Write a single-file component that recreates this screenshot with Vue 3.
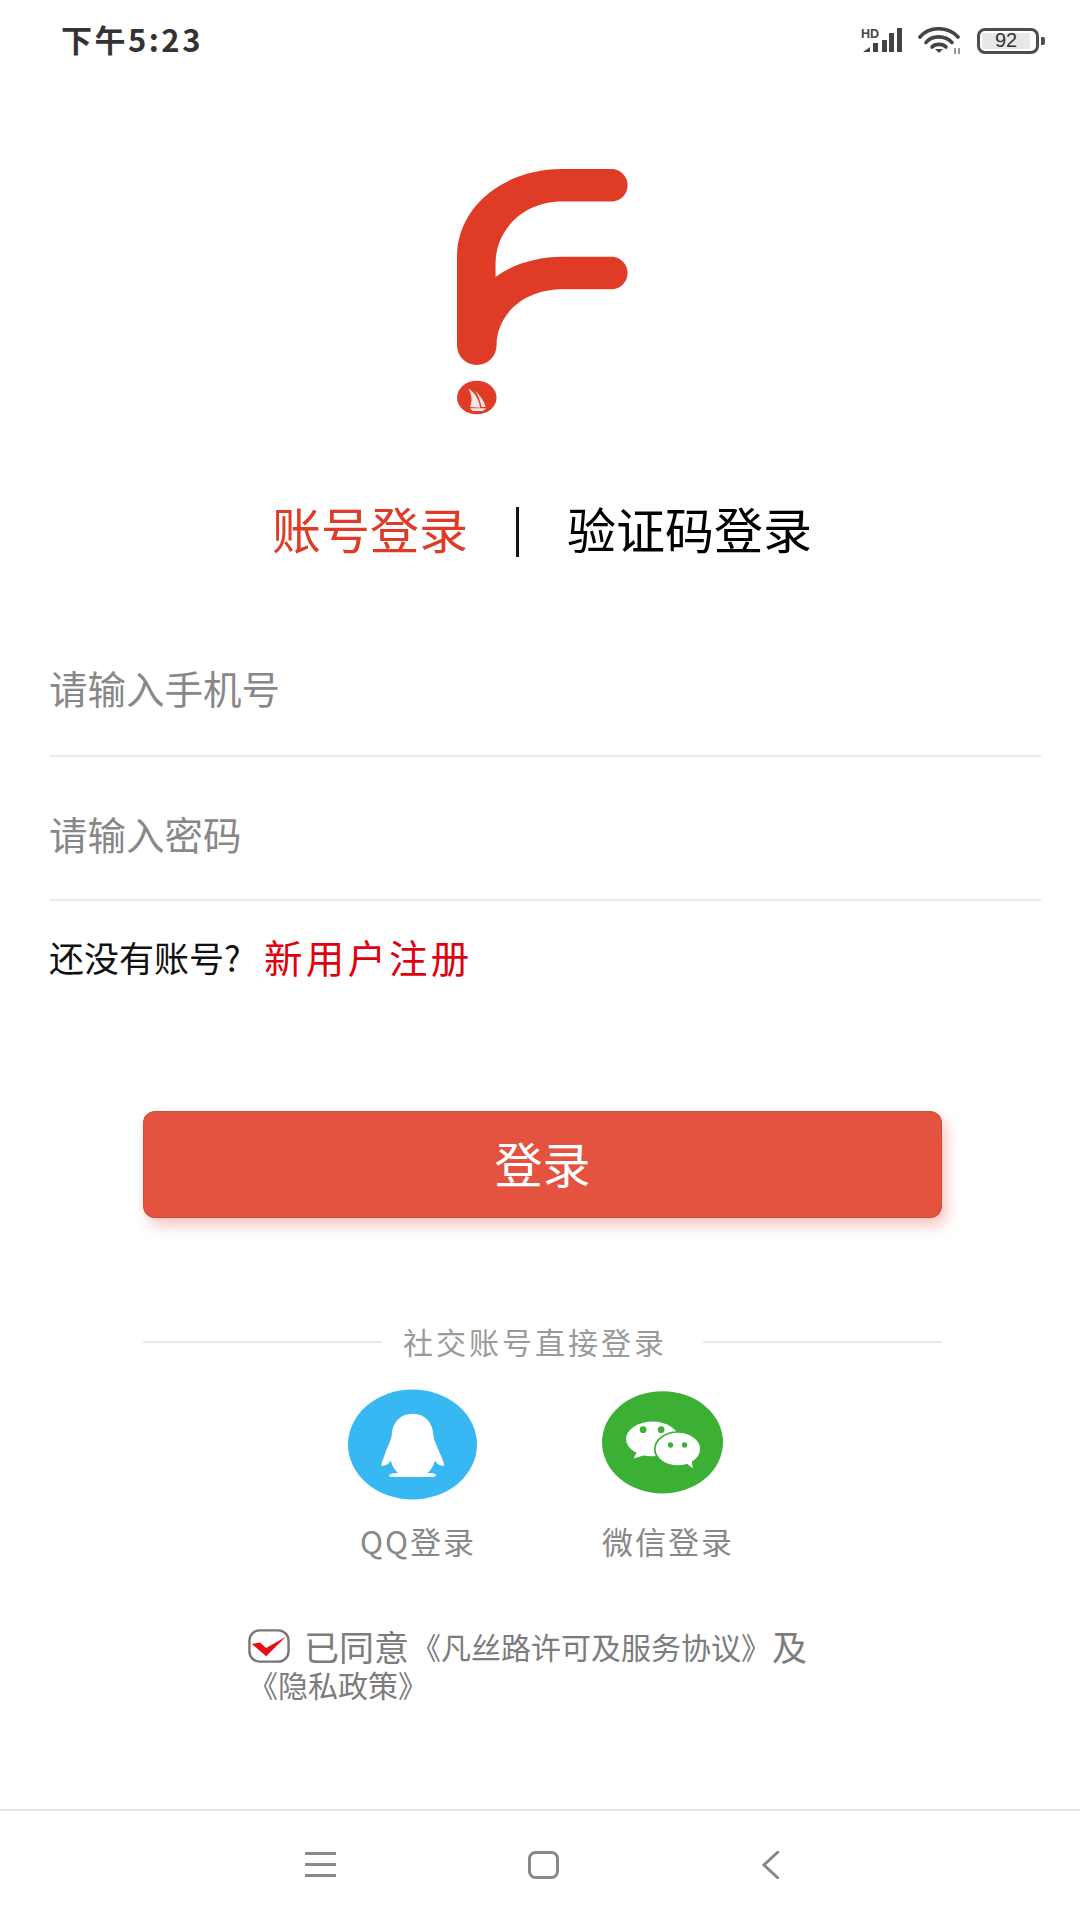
<script setup>
import { ref } from "vue";

const mode = ref("account");
const agreed = ref(true);
</script>

<template>
  <div class="page">
    <!-- статус бар -->
    <div class="status-bar">
      <span class="time">下午5:23</span>
      <div class="status-icons">
        <svg class="signal" width="43" height="28" viewBox="0 0 43 28">
          <text x="0" y="10.500" class="hd">HD</text>
          <path d="M2 25l7-5v5zM12 25v-9h5v9zM21 25V13h5v12zM28 25V6h5v19zM36 25V1h5v24z" fill="#444" />
        </svg>
        <svg class="wifi" width="43" height="28" viewBox="0 0 43 28">
          <g fill="none" stroke="#444" stroke-width="3.6" stroke-linecap="round">
            <path d="M2 10C11 -1 30 -1 40 10" />
            <path d="M8 15.500C14 8 27 8 34 15.500" />
            <path d="M14 20C17 16.500 25 16.500 28 20" />
          </g>
          <path d="M17 22h8l-4 4z" fill="#444" />
          <path d="M37 21v6M41 21v6" stroke="#777" stroke-width="1.500" />
        </svg>
        <div class="battery">
          <div class="battery-body"><span class="battery-level">92</span></div>
          <div class="battery-nub"></div>
        </div>
      </div>
    </div>

    <!-- логотип -->
    <div class="logo">
      <svg width="174" height="246" viewBox="112 58 510 734" preserveAspectRatio="none">
        <path
          d="M570 58A49 49 0 0 1 570 155L420 155C310 155 226 235 225 340L225 380C280 340 350 320 420 320L570 320A49 49 0 0 1 570 417L420 417C310 417 228 490 228 585A58 58 0 0 1 112 585L112 320C112 170 250 58 420 58Z"
          fill="#e03b27"
        />
        <ellipse cx="170" cy="740" rx="58" ry="50" fill="#e03b27" />
        <path d="M145 713C165 725 176 745 180 770L150 768C158 750 155 730 145 713ZM165 720C182 735 192 752 196 768L184 768C180 750 175 735 165 720ZM150 772L198 772L188 780L158 780Z" fill="#f7e6e4" />
      </svg>
    </div>

    <!-- вкладки -->
    <div class="tabs">
      <span class="tab" :class="{ active: mode === 'account' }">账号登录</span>
      <span class="tab-sep"></span>
      <span class="tab" :class="{ active: mode === 'code' }">验证码登录</span>
    </div>

    <div class="form">
      <div class="field">请输入手机号</div>
      <div class="field">请输入密码</div>
      <div class="hint">
        <span class="hint-text">还没有账号?</span>
        <span class="hint-link">新用户注册</span>
      </div>
    </div>

    <button class="login-btn">登录</button>

    <div class="divider">
      <span class="divider-line"></span>
      <span class="divider-text">社交账号直接登录</span>
      <span class="divider-line"></span>
    </div>

    <!-- соцсети -->
    <div class="social">
      <div class="social-item qq">
        <svg class="social-icon" width="129" height="111" viewBox="83 60 389 332">
          <ellipse cx="277.500" cy="226" rx="194.500" ry="166" fill="#37b8f3" />
          <path
            d="M278 133C240 133 217 160 215 195C215 210 205 225 196 250C190 268 184 280 183 290C195 292 205 285 212 275C218 295 226 305 234 312C222 312 207 314 207 320C207 324 215 324 225 324L330 324C342 324 349 323 348 318C347 313 335 312 322 312C332 305 340 292 345 275C352 286 362 292 373 290C372 275 362 258 355 240C348 225 341 210 340 195C338 160 316 133 278 133Z"
            fill="#fff"
          />
        </svg>
        <span class="social-label">QQ登录</span>
      </div>
      <div class="social-item wechat">
        <svg class="social-icon" width="121" height="103" viewBox="845 65 362 307">
          <ellipse cx="1026" cy="218" rx="181" ry="153" fill="#3cb034" />
          <ellipse cx="996" cy="208" rx="79" ry="52" fill="#fff" />
          <path d="M952 240L940 266L985 252Z" fill="#fff" />
          <ellipse cx="1072" cy="238" rx="69" ry="51" fill="#fff" stroke="#3cb034" stroke-width="5" />
          <path d="M1095 278L1117 296L1112 268Z" fill="#fff" />
          <circle cx="968" cy="180" r="10" fill="#3cb034" />
          <circle cx="1022" cy="180" r="10" fill="#3cb034" />
          <circle cx="1050" cy="226" r="8" fill="#3cb034" />
          <circle cx="1092" cy="226" r="8" fill="#3cb034" />
        </svg>
        <span class="social-label">微信登录</span>
      </div>
    </div>

    <!-- соглашение -->
    <div class="agree">
      <svg class="check" width="42" height="34" viewBox="55 62 123 100">
        <rect x="59" y="66" width="115" height="92" rx="30" fill="#fff" stroke="#777" stroke-width="7" />
        <path v-if="agreed" d="M66 106L90 102L108 118L166 85L108 142Z" fill="#e60f17" />
      </svg>
      <span class="agree-big">已同意</span>
      <span class="agree-small">《凡丝路许可及服务协议》</span>
      <span class="agree-big tail">及</span>
    </div>
    <div class="agree-second">《隐私政策》</div>

    <!-- навигация -->
    <div class="nav-bar">
      <svg width="31" height="28" viewBox="0 0 31 28">
        <path d="M1 2.500H30M1 13.500H30M1 24.500H30" stroke="#888" stroke-width="3" stroke-linecap="round" />
      </svg>
      <svg width="31" height="28" viewBox="0 0 31 28">
        <rect x="1.500" y="1.500" width="28" height="25" rx="6" fill="none" stroke="#888" stroke-width="3" />
      </svg>
      <svg width="17" height="28" viewBox="0 0 17 28">
        <path d="M16 1L2 14L16 27" fill="none" stroke="#888" stroke-width="3" stroke-linecap="round" />
      </svg>
    </div>
  </div>
</template>

<style scoped>
.page {
  width: 1080px;
  height: 1920px;
  display: flex;
  flex-direction: column;
  background: #fff;
  font-family: "Noto Sans CJK SC", "Liberation Sans", sans-serif;
  overflow: hidden;
}

.status-bar {
  height: 82px;
  display: flex;
  align-items: center;
  justify-content: space-between;
  padding: 0 35px 0 61px;
  box-sizing: border-box;
}

.time {
  font-size: 31px;
  line-height: 40px;
  padding-bottom: 4px;
  font-weight: 700;
  letter-spacing: 2.5px;
  color: #333;
}

.status-icons {
  display: flex;
  align-items: center;
}

.signal,
.wifi {
  display: block;
}

.signal {
  margin-right: 14px;
}

.wifi {
  margin-right: 16px;
}

.hd {
  font-family: "Liberation Sans", sans-serif;
  font-size: 12.5px;
  font-weight: 700;
  fill: #444;
}

.battery {
  display: flex;
  align-items: center;
}

.battery-body {
  width: 62px;
  height: 26px;
  box-sizing: border-box;
  border: 3.5px solid #4d4d4d;
  border-radius: 8px;
  padding: 2px 6px 2px 2px;
  display: flex;
}

.battery-level {
  flex: 1;
  background: #e8e8e8;
  color: #333;
  font-family: "Liberation Sans", sans-serif;
  font-size: 20px;
  line-height: 15px;
  text-align: center;
}

.battery-nub {
  width: 4px;
  height: 8px;
  margin-left: 2px;
  background: #4d4d4d;
  border-radius: 0 2px 2px 0;
}

.logo {
  margin-top: 87px;
  padding-left: 457px;
  height: 249px;
}

.logo svg {
  display: block;
}

.tabs {
  margin-top: 87px;
  height: 53px;
  padding-left: 272px;
  display: flex;
  align-items: center;
}

.tab {
  font-size: 49px;
  line-height: 53px;
  padding-bottom: 9px;
  color: #000;
}

.tab.active {
  color: #e03b27;
}

.tab-sep {
  width: 3px;
  height: 50px;
  margin: 0 48px;
  background: #111;
}

.form {
  padding: 53px 39px 0 49px;
}

.field {
  padding: 54px 0 46px 0;
  font-size: 38.5px;
  line-height: 44px;
  color: #888;
  border-bottom: 2px solid #e9e9e9;
}

.field + .field {
  padding-top: 54px;
  padding-bottom: 44px;
}

.hint {
  margin-top: 33px;
  height: 44px;
  display: flex;
  align-items: center;
}

.hint-text {
  width: 215px;
  font-size: 35px;
  white-space: nowrap;
  color: #111;
}

.hint-link {
  font-size: 38.5px;
  letter-spacing: 3.2px;
  color: #e0000e;
}

.login-btn {
  display: block;
  margin: 133px 0 0 143px;
  width: 799px;
  height: 107px;
  padding: 0 0 5px;
  border: 1px solid #cf4a3a;
  border-top-color: #b55a45;
  border-radius: 12px;
  background: #e45240;
  box-shadow: 5px 8px 14px rgba(228, 82, 64, 0.32);
  color: #fff;
  font-family: inherit;
  font-size: 48px;
}

.divider {
  margin-top: 102px;
  height: 44px;
  padding-left: 143px;
  display: flex;
  align-items: center;
}

.divider-line {
  width: 239px;
  height: 2px;
  background: #e9e9e9;
}

.divider-text {
  width: 321px;
  box-sizing: border-box;
  padding: 0 15px 2px 0;
  text-align: center;
  font-size: 30px;
  letter-spacing: 3px;
  color: #9a9a9a;
}

.social {
  margin-top: 25px;
  padding-left: 348px;
  display: flex;
}

.social-item {
  display: flex;
  flex-direction: column;
  align-items: flex-start;
}

.social-item.qq {
  width: 254px;
}

.social-icon {
  display: block;
}

.wechat .social-icon {
  margin-top: 2px;
  margin-bottom: 6px;
}

.social-label {
  margin-top: 19px;
  line-height: 44px;
  font-size: 31px;
  letter-spacing: 2px;
  color: #888;
  white-space: nowrap;
}

.qq .social-label {
  margin-left: 12px;
}

.agree {
  margin-top: 63px;
  height: 40px;
  line-height: 40px;
  padding-left: 248px;
  display: flex;
  align-items: center;
  white-space: nowrap;
}

.check {
  display: block;
  margin-right: 14px;
}

.agree-big {
  font-size: 35px;
  color: #7c7c7c;
}

.agree-small {
  font-size: 30px;
  margin-left: 2px;
  color: #7c7c7c;
}

.agree-big.tail {
  margin-left: 1px;
}

.agree-second {
  height: 36px;
  line-height: 36px;
  padding-left: 248px;
  font-size: 30px;
  color: #7c7c7c;
}

.nav-bar {
  margin-top: auto;
  height: 111px;
  box-sizing: border-box;
  border-top: 2px solid #e6e6e6;
  padding: 40px 0 0 305px;
  display: flex;
  align-items: flex-start;
}

.nav-bar svg {
  display: block;
}

.nav-bar svg:nth-child(2) {
  margin-left: 192px;
}

.nav-bar svg:nth-child(3) {
  margin-left: 203px;
}
</style>
